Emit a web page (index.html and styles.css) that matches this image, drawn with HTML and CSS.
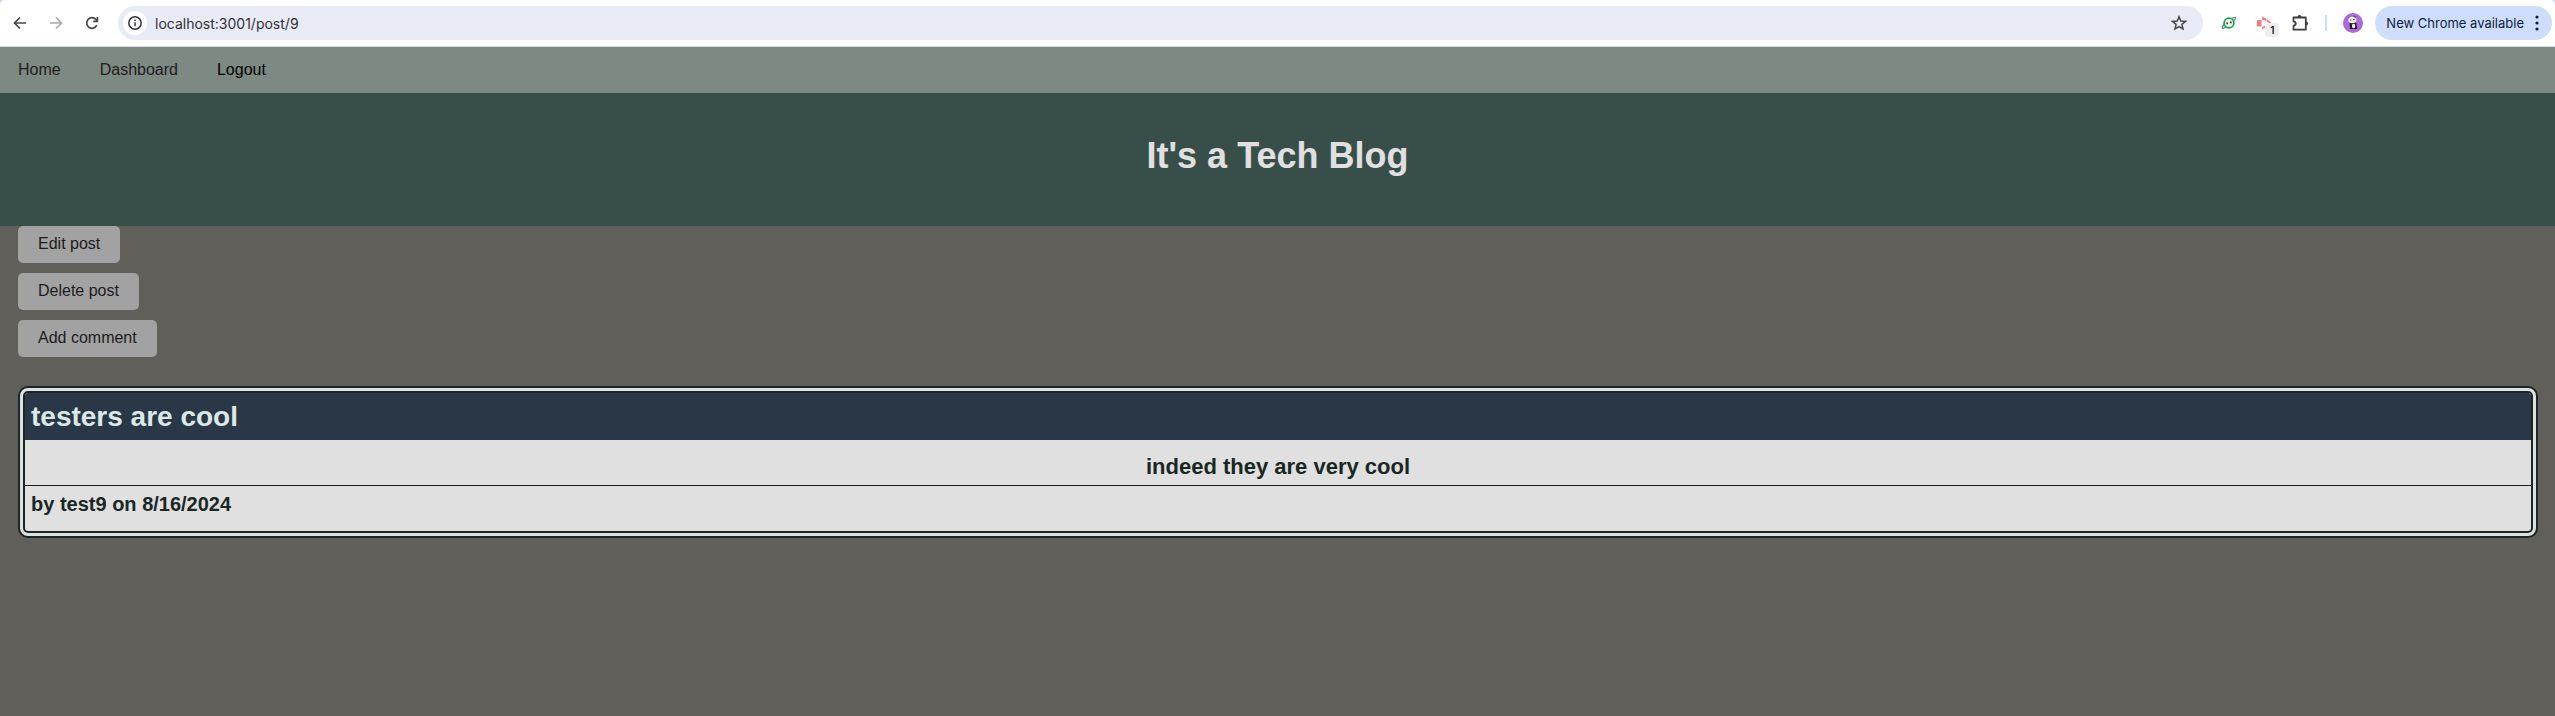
FILE: index.html
```html
<!DOCTYPE html>
<html lang="en">
<head>
<meta charset="utf-8">
<title>It's a Tech Blog</title>
<link rel="stylesheet" href="styles.css">
</head>
<body>
<div class="window-top">
<div class="toolbar">
  <div class="history">
    <button class="icon-btn" aria-label="Back"><svg width="16" height="16" viewBox="0 0 16 16" fill="none" stroke="#474747" stroke-width="1.7"><path d="M14 8H3M8 2.5 2.5 8 8 13.500"/></svg></button>
    <button class="icon-btn" aria-label="Forward"><svg width="16" height="16" viewBox="0 0 16 16" fill="none" stroke="#a9a9a9" stroke-width="1.7"><path d="M2 8h11M8 2.500 13.500 8 8 13.500"/></svg></button>
    <button class="icon-btn" aria-label="Reload"><svg width="16" height="16" viewBox="0 0 16 16" fill="none" stroke="#474747" stroke-width="1.700"><path d="M12.800 10.200A5.300 5.300 0 1 1 12 4.500L13 5.800"/><path d="M13.400 2v4.300H9.200"/></svg></button>
  </div>
  <div class="address">
    <button class="site-info" aria-label="Site information"><svg width="16" height="16" viewBox="0 0 16 16" fill="none" stroke="#33343a" stroke-width="1.500"><circle cx="8" cy="8" r="6.200"/><path d="M8 7.200v4M8 4.500v1.500"/></svg></button>
    <input class="url" type="text" aria-label="Address" value="localhost:3001/post/9">
    <button class="icon-btn" aria-label="Bookmark"><svg width="16" height="16" viewBox="0 0 16 16" fill="none" stroke="#474747" stroke-width="1.500"><path d="m8 1.800 1.800 4.200 4.700.4-3.600 3 1.100 4.600L8 11.600 4 14l1.100-4.600-3.600-3 4.700-.4z"/></svg></button>
  </div>
  <div class="extensions">
    <button class="icon-btn" aria-label="Planet extension"><svg width="16" height="16" viewBox="0 0 16 16" fill="none"><path d="M4 8.500C1.500 11 .6 12.700 1.400 13.300c1.800.6 12.800-8 13.200-10.200.2-1-1.800-.7-4 .4" stroke="#6b7773" stroke-width="1.200"/><circle cx="8" cy="8" r="4.900" fill="#e6f6eb" stroke="#249d50" stroke-width="1.700"/><path d="M6.200 7.500v1.800M9.800 6.500v1.800" stroke="#26332c" stroke-width="1.600"/></svg></button>
    <button class="icon-btn capture" aria-label="Capture extension, 1 notification"><svg width="16" height="16" viewBox="0 0 16 16" fill="#fb7b7b"><path d="M1 5h4.500v6.500H1zM6 1.500l4 2V6L6 4.500zM10.500 4l4.500 3v2l-4.500-2.500zM6 12l3.500-1.500v2L6 14.500z"/></svg><span class="count">1</span></button>
    <button class="icon-btn" aria-label="Extensions"><svg width="18" height="18" viewBox="0 0 18 18" fill="none" stroke="#3d3d3d" stroke-width="1.800"><path d="M2.500 3.500h12.300v12.200H2.500v-3.900c3-.6 3-3.800 0-4.400z" stroke-linejoin="round"/><path d="M6.500 3a2 2 0 0 1 4 0zM15 7.500a2 2 0 0 1 0 4z" fill="#3d3d3d" stroke="none"/></svg></button>
    <span class="divider"></span>
    <button class="icon-btn" aria-label="Profile"><svg width="20" height="20" viewBox="0 0 20 20"><circle cx="10" cy="10" r="10" fill="#af67d9"/><path d="M6.500 9.500c1-1.500 5.500-1.500 6.500 0l1 4.500v2H7z" fill="#201c24"/><circle cx="6.300" cy="5" r="1.100" fill="#201c24"/><circle cx="11.800" cy="4.300" r="1.100" fill="#201c24"/><ellipse cx="9.300" cy="7" rx="4.100" ry="3.200" fill="#f3eef4"/><path d="M7.200 7h1.200M10.300 6.600h1.200" stroke="#201c24" stroke-width="1.200"/><ellipse cx="10.600" cy="13" rx="1.700" ry="2.300" fill="#eee"/></svg></button>
  </div>
  <button class="update">New Chrome available<svg width="4" height="16" viewBox="0 0 4 16" fill="#0c1d41"><circle cx="2" cy="2" r="1.600"/><circle cx="2" cy="8" r="1.600"/><circle cx="2" cy="14" r="1.600"/></svg></button>
</div>
</div>
<nav class="site-nav">
  <a href="#home">Home</a>
  <a href="#dashboard">Dashboard</a>
  <a class="logout" href="#logout">Logout</a>
</nav>
<header class="banner"><h1>It's a Tech Blog</h1></header>
<main class="content">
  <div class="actions">
    <button class="action">Edit post</button>
    <button class="action">Delete post</button>
    <button class="action">Add comment</button>
  </div>
  <article class="post">
    <h2 class="post-title">testers are cool</h2>
    <p class="post-body">indeed they are very cool</p>
    <p class="post-meta">by test9 on 8/16/2024</p>
  </article>
</main>
</body>
</html>
```
FILE: styles.css
```css
* { box-sizing: border-box; }
body {
  margin: 0;
  min-height: 100vh;
  background: #605f5a;
  color: #192824;
  font-family: "Liberation Sans", Arial, sans-serif;
  font-size: 16px;
}
button { font: inherit; border: 0; cursor: pointer; }

.window-top { background: #cfddfc; }
.toolbar {
  display: flex;
  align-items: center;
  gap: 18px;
  height: 47px;
  padding: 0 3px 0 12px;
  background: #fff;
  border-bottom: 1px solid #d5d9d7;
  border-radius: 5px 5px 0 0;
  font-family: Inter, sans-serif;
}
.history { display: flex; gap: 20px; }
.icon-btn {
  display: flex;
  flex: none;
  padding: 0;
  background: none;
}
.address {
  display: flex;
  flex: 1;
  align-items: center;
  height: 34px;
  padding: 0 16px 0 5px;
  border-radius: 17px;
  background: #e8ebf5;
}
.site-info {
  display: grid;
  place-items: center;
  flex: none;
  width: 24px;
  height: 24px;
  padding: 0;
  border-radius: 50%;
  background: #fff;
}
.url {
  flex: 1;
  min-width: 0;
  padding: 0 8px;
  border: 0;
  outline: 0;
  background: none;
  color: #303136;
  font: 14px Inter, sans-serif;
}
.extensions {
  display: flex;
  align-items: center;
  gap: 19px;
}
.capture { position: relative; }
.count {
  position: absolute;
  top: 8px;
  left: 9px;
  width: 14px;
  border-radius: 4px;
  background: #eee;
  color: #222;
  font-size: 10px;
  font-weight: 600;
  line-height: 14px;
  text-align: center;
}
.divider {
  width: 2px;
  height: 16px;
  margin: 0 -3px;
  background: #cfdefb;
}
.update {
  display: flex;
  flex: none;
  align-items: center;
  gap: 11px;
  height: 34px;
  margin-left: -6px;
  padding: 0 13px 0 11px;
  border-radius: 17px;
  background: #cfddfc;
  color: #0c1d41;
  font-size: 13px;
}

.site-nav {
  display: flex;
  gap: 39px;
  padding: 14px 18px;
  background: #7d8983;
  line-height: 18px;
}
.site-nav a { color: #1d201f; text-decoration: none; }
.site-nav .logout { color: #000; }
.banner {
  padding: 42px 18px 49px;
  background: #384e48;
  color: #e0e0e0;
  text-align: center;
}
.banner h1 { margin: 0; font-size: 36px; line-height: 42px; }
.content { padding: 0 17px 0 18px; }
.actions {
  display: flex;
  flex-direction: column;
  align-items: flex-start;
  gap: 10px;
  margin-bottom: 29px;
}
.action {
  padding: 9px 20px 10px;
  border-radius: 5px;
  background: #a2a2a2;
  color: #1c1c1c;
  line-height: 18px;
}
.post {
  overflow: hidden;
  border: 7px double #192824;
  border-radius: 10px;
  background: #e0e0e0;
  font-weight: bold;
}
.post-title {
  margin: 0;
  padding: 8px 6px 7px;
  background: #2a3747;
  color: #dbe9e6;
  font-size: 28px;
  line-height: 32px;
}
.post-body {
  margin: 0;
  padding: 14px 6px 5px;
  border-bottom: 1px solid #192020;
  font-size: 22px;
  line-height: 26px;
  text-align: center;
}
.post-meta {
  margin: 0;
  padding: 6px 6px 15px;
  font-size: 20px;
  line-height: 24px;
}
```
